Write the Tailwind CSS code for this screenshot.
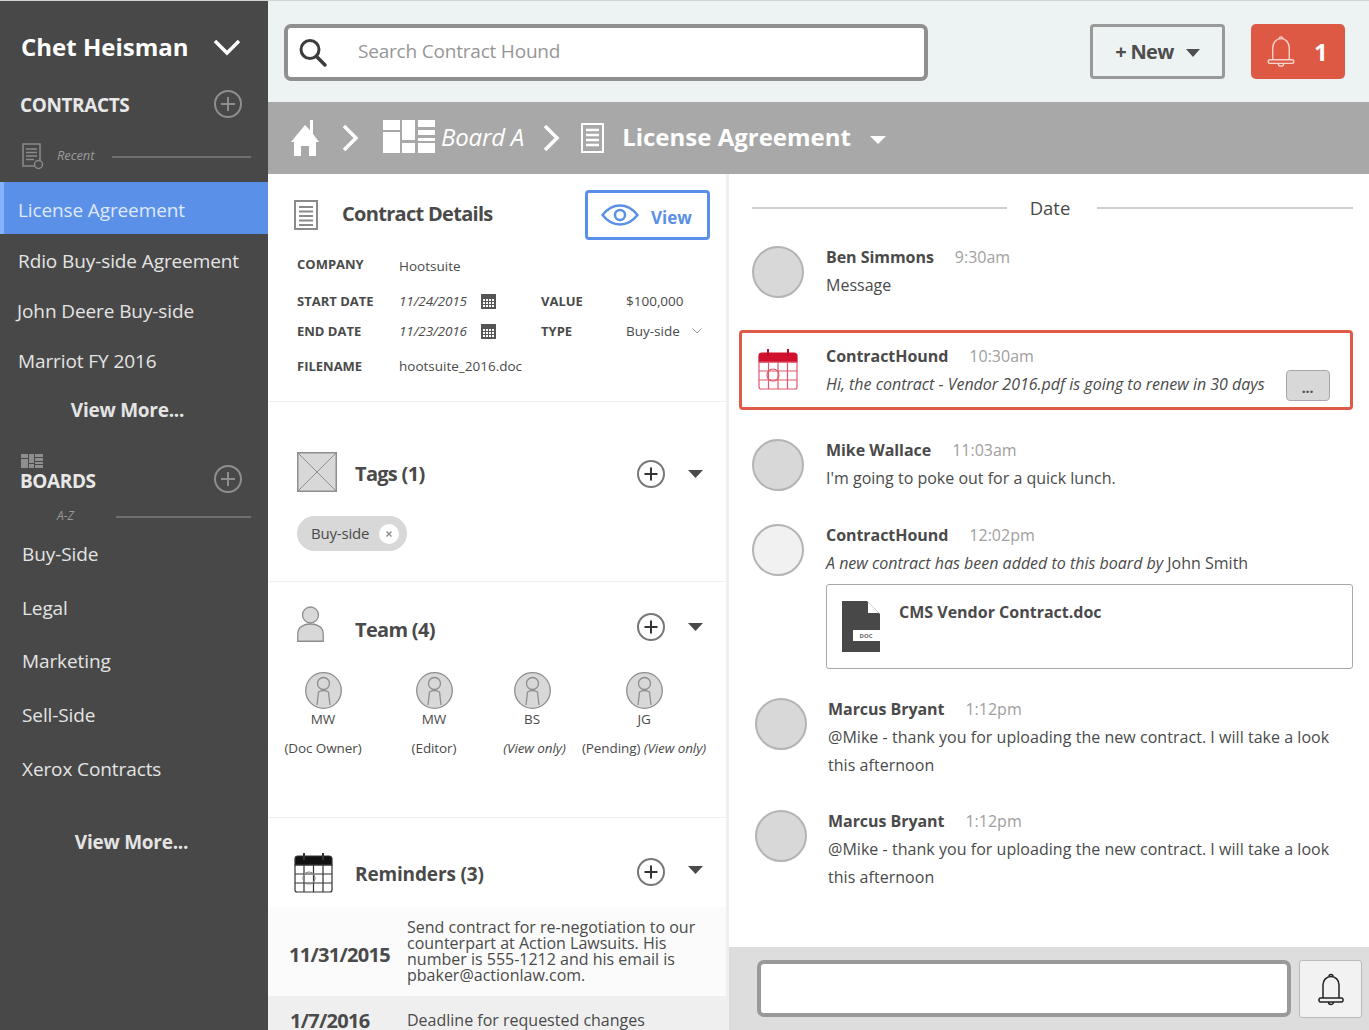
<!DOCTYPE html>
<html lang="en">
<head>
    <meta charset="UTF-8">
    <title>Contract Hound</title>
    <script src="https://cdn.jsdelivr.net/npm/@tailwindcss/browser@4"></script>
</head>
<body class="[font-family:'Open_Sans',sans-serif] text-[#4a4a4a] bg-white">
<div class="flex w-[1369px] h-[1030px] overflow-hidden border-t border-[#d0d4d4]">

    <!-- sidebar -->
    <aside class="w-[268px] shrink-0 bg-[#484848] text-[#e4e4e4]">
        <div class="flex items-center justify-between h-[46px] mt-[23px] pl-[21px] pr-[27px]">
            <span class="text-[24px] font-bold text-white">Chet Heisman</span>
            <svg width="28" height="18" viewBox="0 0 28 18" fill="none" stroke="#fff" stroke-width="3.5"><path d="M2 3l12 12L26 3"/></svg>
        </div>
        <div class="flex items-center justify-between h-[36px] mt-[17px] pl-[20px] pr-[26px]">
            <span class="text-[19px] font-bold tracking-[-0.4px] text-[#e8e8e8]">CONTRACTS</span>
            <svg class="mt-[-2px]" width="28" height="28" viewBox="0 0 28 28" fill="none" stroke="#8e8e8e" stroke-width="2"><circle cx="14" cy="14" r="13"/><path d="M14 7v14M7 14h14"/></svg>
        </div>
        <div class="flex items-center h-[30px] mt-[18px] pl-[22px] pr-[17px]">
            <svg width="22" height="27" viewBox="0 0 22 27" fill="none" stroke="#8a8a8a" stroke-width="1.5"><path d="M1 1h17v22H1z"/><path d="M4 6h11M4 9.500h11M4 13h11M4 16.500h8"/><circle cx="16.500" cy="21.500" r="4" fill="#484848"/></svg>
            <span class="ml-[13px] text-[13px] italic tracking-[-0.1px] text-[#999]">Recent</span>
            <div class="ml-[18px] mt-[2px] flex-1 h-[2px] bg-[#6f6f6f]"></div>
        </div>
        <a class="flex items-center h-[52px] mt-[11px] border-l-[4px] border-[#86b1ff] bg-[#5b90e8] pl-[14px] pt-[5px] text-[19px] tracking-[-0.12px] text-[#dfe9fb]">License Agreement</a>
        <div class="mt-[2px] text-[19px] tracking-[-0.1px]">
            <a class="flex items-center h-[50px] pl-[18px]">Rdio Buy-side Agreement</a>
            <a class="flex items-center h-[50px] pl-[17px]">John Deere Buy-side</a>
            <a class="flex items-center h-[50px] pl-[18px]">Marriot FY 2016</a>
            <a class="flex items-center justify-center h-[50px] pr-[13px] pb-[2px] text-[19px] tracking-[-0.25px] font-bold">View More...</a>
        </div>
        <div class="flex justify-between items-end mt-[18px] pl-[20px] pr-[26px]">
            <div>
                <svg class="ml-[1px]" width="22" height="14" viewBox="0 0 22 14" fill="#8e8e8e"><path d="M0 0h7v4H0zM0 5h7v9H0zM8 0h5v9H8zM8 10h5v4H8zM14 0h8v3h-8zM14 4h8v3h-8zM14 8h8v2h-8zM14 11h8v3h-8z"/></svg>
                <div class="mt-[1px] h-[24px] leading-[24px] text-[19px] font-bold tracking-[-0.4px] text-[#e8e8e8]">BOARDS</div>
            </div>
            <svg width="28" height="28" viewBox="0 0 28 28" fill="none" stroke="#8e8e8e" stroke-width="2"><circle cx="14" cy="14" r="13"/><path d="M14 7v14M7 14h14"/></svg>
        </div>
        <div class="flex items-center h-[20px] mt-[13px] pl-[57px] pr-[17px]">
            <span class="text-[12px] italic text-[#999]">A-Z</span>
            <div class="ml-[42px] mt-[2px] flex-1 h-[2px] bg-[#6f6f6f]"></div>
        </div>
        <div class="mt-[1px] text-[19px] tracking-[-0.1px] pl-[22px]">
            <a class="flex items-center h-[54px]">Buy-Side</a>
            <a class="flex items-center h-[54px]">Legal</a>
            <a class="flex items-center h-[53px]">Marketing</a>
            <a class="flex items-center h-[54px]">Sell-Side</a>
            <a class="flex items-center h-[54px]">Xerox Contracts</a>
        </div>
        <a class="flex items-center justify-center h-[40px] mt-[26px] pr-[5px] text-[19px] tracking-[-0.25px] font-bold">View More...</a>
    </aside>

    <div class="flex-1 flex flex-col min-w-0">
        <!-- top bar -->
        <header class="flex h-[101px] shrink-0 bg-[#edf3f3] pl-[16px] pt-[23px]">
            <div class="flex items-center w-[644px] h-[57px] border-[4px] border-[#8f8f8f] rounded-[7px] bg-white pl-[9px]">
                <svg width="32" height="32" viewBox="0 0 32 32" fill="none" stroke="#3c3c3c" stroke-width="3"><circle cx="13" cy="12.500" r="9"/><path d="M20 20l8 8" stroke-linecap="round" stroke-width="3.500"/></svg>
                <span class="ml-[29px] mb-[2px] text-[19px] tracking-[-0.2px] text-[#969696]">Search Contract Hound</span>
            </div>
            <button class="flex items-center justify-center gap-[12px] ml-[162px] w-[135px] h-[55px] border-[3px] border-[#999] rounded-[4px] text-[20px] font-bold tracking-[-0.7px] text-[#4e4e4e]">
                <span>+ New</span>
                <svg class="mt-[3px]" width="14" height="8" viewBox="0 0 14 8" fill="#4e4e4e"><path d="M0 0h14L7 8z"/></svg>
            </button>
            <button class="flex items-center ml-[26px] pl-[16px] w-[94px] h-[55px] rounded-[5px] bg-[#dd5944] text-white">
                <svg width="28" height="33" viewBox="0 0 30 36" fill="none" stroke="#f8d5cf" stroke-width="1.500"><path d="M6 27V14c0-6 4-10 9-10s9 4 9 10v13"/><path d="M3 27h24q2 0 2 2t-2 2H3q-2 0-2-2t2-2z"/><path d="M12 31a3 3 0 0 0 6 0M13 4a2 2 0 0 1 4 0"/></svg>
                <span class="ml-[19px] text-[24px] font-bold">1</span>
            </button>
        </header>

        <!-- breadcrumb -->
        <nav class="flex items-center h-[72px] shrink-0 bg-[#a8a8a8] pl-[23px] text-white">
            <svg width="28" height="36" viewBox="0 0 28 36" fill="#fff"><path d="M14 5l5 5V0h3v14l6 8h-3v14h-7V26H10v10H3V22H0z"/></svg>
            <svg class="ml-[23px]" width="18" height="28" viewBox="0 0 18 28" fill="none" stroke="#fff" stroke-width="3.500"><path d="M2 2l12 12L2 26"/></svg>
            <svg class="ml-[23px] mb-[4px]" width="52" height="33" viewBox="0 0 52 33" fill="#fff"><path d="M0 0h17v10H0zM0 12h17v21H0zM19 0h13v20H19zM19 23h13v10H19zM35 0h17v7H35zM35 10h17v5H35zM35 18h17v3H35zM35 23h17v10H35z"/></svg>
            <span class="ml-[6px] mb-[2px] text-[24px] italic tracking-[-0.2px]">Board A</span>
            <svg class="ml-[19px]" width="18" height="28" viewBox="0 0 18 28" fill="none" stroke="#fff" stroke-width="3.500"><path d="M2 2l12 12L2 26"/></svg>
            <svg class="ml-[20px]" width="23" height="30" viewBox="0 0 23 30" fill="none" stroke="#fff" stroke-width="2"><path d="M1 1h21v28H1z"/><path d="M5 7h13M5 12h13M5 17h13M5 22h13" stroke-width="2.500"/></svg>
            <span class="ml-[18px] mb-[2px] text-[24px] font-bold">License Agreement</span>
            <svg class="ml-[19px] mt-[4px]" width="16" height="8" viewBox="0 0 16 8" fill="#fff"><path d="M0 0h16L8 8z"/></svg>
        </nav>

        <div class="flex flex-1 min-h-0">
            <!-- details column -->
            <section class="w-[458px] shrink-0 overflow-hidden">
                <div class="h-[228px] border-b border-[#f0f0f0] pt-[16px]">
                    <div class="flex items-center h-[50px] pl-[26px] pr-[16px]">
                        <svg width="24" height="30" viewBox="0 0 24 30" fill="none" stroke="#8a8a8a" stroke-width="2"><path d="M1 1h22v28H1z"/><path d="M5 7h14M5 11.500h14M5 16h14M5 20.500h14M5 25h14" stroke-width="1.800"/></svg>
                        <span class="ml-[24px] mb-[2px] text-[20px] font-bold tracking-[-0.7px]">Contract Details</span>
                        <button class="flex items-center ml-auto pl-[13px] w-[125px] h-[50px] border-[3px] border-[#5b90e8] rounded-[4px] text-[#5b90e8] text-[17px] font-bold">
                            <svg width="38" height="22" viewBox="0 0 38 22" fill="none" stroke="#5b90e8" stroke-width="2.500"><path d="M1.500 11C7 4 13 1.500 19 1.500S31 4 36.500 11C31 18 25 20.500 19 20.500S7 18 1.500 11z"/><circle cx="19" cy="11" r="5"/></svg>
                            <span class="ml-[12px] mt-[6px]">View</span>
                        </button>
                    </div>
                    <div class="flex items-center h-[32px] mt-[10px] pl-[29px] text-[13.500px]">
                        <span class="w-[102px] text-[13px] font-bold mt-[-2px]">COMPANY</span><span>Hootsuite</span>
                    </div>
                    <div class="flex items-center h-[30px] mt-[4px] pl-[29px] text-[13.500px]">
                        <span class="w-[102px] text-[13px] font-bold mt-[2px]">START DATE</span>
                        <span class="w-[82px] italic tracking-[-0.1px]">11/24/2015</span>
                        <svg width="15" height="15" viewBox="0 0 15 15"><path fill="#555" d="M0 0h15v15H0z"/><path fill="#fff" d="M2 5h11v8H2z"/><path stroke="#555" d="M2 7.500h11M2 10.500h11M4.500 5v8M7.500 5v8M10.500 5v8"/></svg>
                        <span class="ml-[45px] mt-[2px] w-[85px] text-[13px] font-bold">VALUE</span>
                        <span>$100,000</span>
                    </div>
                    <div class="flex items-center h-[30px] pl-[29px] text-[13.500px]">
                        <span class="w-[102px] text-[13px] font-bold mt-[2px]">END DATE</span>
                        <span class="w-[82px] italic tracking-[-0.1px]">11/23/2016</span>
                        <svg width="15" height="15" viewBox="0 0 15 15"><path fill="#555" d="M0 0h15v15H0z"/><path fill="#fff" d="M2 5h11v8H2z"/><path stroke="#555" d="M2 7.500h11M2 10.500h11M4.500 5v8M7.500 5v8M10.500 5v8"/></svg>
                        <span class="ml-[45px] mt-[2px] w-[85px] text-[13px] font-bold">TYPE</span>
                        <span>Buy-side</span>
                        <svg class="ml-[12px]" width="10" height="6" viewBox="0 0 10 6" fill="none" stroke="#999"><path d="M.5.500L5 5 9.500.500"/></svg>
                    </div>
                    <div class="flex items-center h-[32px] mt-[4px] pl-[29px] text-[13.500px]">
                        <span class="w-[102px] text-[13px] font-bold mt-[2px]">FILENAME</span><span>hootsuite_2016.doc</span>
                    </div>
                </div>

                <div class="h-[180px] border-b border-[#f0f0f0] pt-[50px]">
                    <div class="flex items-center h-[40px] pl-[29px] pr-[23px]">
                        <svg width="40" height="40" viewBox="0 0 40 40" fill="#d8d8d8" stroke="#8e8e8e"><path stroke-width="1.500" d="M.75.750h38.500v38.500H.75z"/><path d="M1 1l38 38M39 1L1 39"/></svg>
                        <span class="ml-[18px] mt-[4px] text-[20px] font-bold tracking-[-0.7px]">Tags (1)</span>
                        <svg class="ml-auto mt-[4px]" width="28" height="28" viewBox="0 0 28 28" fill="none" stroke="#777" stroke-width="2"><circle cx="14" cy="14" r="13"/><path d="M14 7.500v13M7.500 14h13" stroke="#333"/></svg>
                        <svg class="ml-[23px] mt-[3px]" width="15" height="8" viewBox="0 0 15 8" fill="#4a4a4a"><path d="M0 0h15L7.500 8z"/></svg>
                    </div>
                    <div class="flex items-center w-[110px] h-[35px] mt-[24px] ml-[29px] pl-[14px] rounded-full bg-[#d8d8d8] text-[15px] tracking-[-0.2px]">
                        <span>Buy-side</span>
                        <span class="flex items-center justify-center ml-[10px] w-[20px] h-[20px] rounded-full bg-white">
                            <svg width="6" height="6" viewBox="0 0 6 6" stroke="#888" stroke-width="1.300"><path d="M.5.500l5 5M5.500.500l-5 5"/></svg>
                        </span>
                    </div>
                </div>

                <div class="h-[236px] border-b border-[#f0f0f0] pt-[24px]">
                    <div class="flex items-start h-[36px] pl-[29px] pr-[23px]">
                        <svg width="27" height="36" viewBox="0 0 27 36" fill="#d8d8d8" stroke="#8e8e8e" stroke-width="1.300"><circle cx="13.500" cy="9" r="8"/><path d="M.75 35.250V28c0-7 6-10 12.750-10s12.750 3 12.750 10v7.250z"/></svg>
                        <span class="ml-[31px] mt-[10px] text-[20px] leading-[28px] font-bold tracking-[-0.7px]">Team (4)</span>
                        <svg class="ml-auto mt-[7px]" width="28" height="28" viewBox="0 0 28 28" fill="none" stroke="#777" stroke-width="2"><circle cx="14" cy="14" r="13"/><path d="M14 7.500v13M7.500 14h13" stroke="#333"/></svg>
                        <svg class="ml-[23px] mt-[17px]" width="15" height="8" viewBox="0 0 15 8" fill="#4a4a4a"><path d="M0 0h15L7.500 8z"/></svg>
                    </div>
                    <div class="grid grid-cols-[110px_112px_84px_140px] mt-[30px] text-center text-[13.500px] tracking-[-0.1px]">
                        <div class="flex flex-col items-center">
                            <svg width="37" height="37" viewBox="0 0 37 37" fill="#d8d8d8" stroke="#8e8e8e" stroke-width="1.300"><circle cx="18.500" cy="18.500" r="17.800"/><circle cx="18.500" cy="11.500" r="6" fill="none"/><path d="M12 33l1.500-13q5-3 10 0L25 33" fill="none"/></svg>
                            <span class="h-[20px] leading-[20px]">MW</span>
                            <span class="mt-[9px] h-[20px] leading-[20px]">(Doc Owner)</span>
                        </div>
                        <div class="flex flex-col items-center">
                            <svg width="37" height="37" viewBox="0 0 37 37" fill="#d8d8d8" stroke="#8e8e8e" stroke-width="1.300"><circle cx="18.500" cy="18.500" r="17.800"/><circle cx="18.500" cy="11.500" r="6" fill="none"/><path d="M12 33l1.500-13q5-3 10 0L25 33" fill="none"/></svg>
                            <span class="h-[20px] leading-[20px]">MW</span>
                            <span class="mt-[9px] h-[20px] leading-[20px]">(Editor)</span>
                        </div>
                        <div class="flex flex-col items-center">
                            <svg width="37" height="37" viewBox="0 0 37 37" fill="#d8d8d8" stroke="#8e8e8e" stroke-width="1.300"><circle cx="18.500" cy="18.500" r="17.800"/><circle cx="18.500" cy="11.500" r="6" fill="none"/><path d="M12 33l1.500-13q5-3 10 0L25 33" fill="none"/></svg>
                            <span class="h-[20px] leading-[20px]">BS</span>
                            <span class="mt-[9px] h-[20px] leading-[20px] ml-[5px] italic whitespace-nowrap">(View only)</span>
                        </div>
                        <div class="flex flex-col items-center">
                            <svg width="37" height="37" viewBox="0 0 37 37" fill="#d8d8d8" stroke="#8e8e8e" stroke-width="1.300"><circle cx="18.500" cy="18.500" r="17.800"/><circle cx="18.500" cy="11.500" r="6" fill="none"/><path d="M12 33l1.500-13q5-3 10 0L25 33" fill="none"/></svg>
                            <span class="h-[20px] leading-[20px]">JG</span>
                            <span class="mt-[9px] h-[20px] leading-[20px] whitespace-nowrap">(Pending) <i>(View only)</i></span>
                        </div>
                    </div>
                </div>

                <div class="h-[89px] pt-[34px]">
                    <div class="flex items-center h-[40px] pl-[26px] pr-[23px]">
                        <svg width="39" height="41" viewBox="0 0 39 41" fill="none" stroke="#333" stroke-width="1.200"><path d="M1 7q0-3 3-3h31q3 0 3 3v6H1z" fill="#111"/><path d="M1 13h37v25q0 2-2 2H3q-2 0-2-2zM1 22h37M1 31h37M10 13v27M19.500 13v27M29 13v27"/><path d="M10 1v7M29 1v7" stroke-width="2"/><circle cx="15" cy="26" r="6" stroke="#888"/></svg>
                        <span class="ml-[22px] mt-[4px] text-[19px] font-bold tracking-[-0.15px]">Reminders (3)</span>
                        <svg class="ml-auto" width="28" height="28" viewBox="0 0 28 28" fill="none" stroke="#777" stroke-width="2"><circle cx="14" cy="14" r="13"/><path d="M14 7.500v13M7.500 14h13" stroke="#333"/></svg>
                        <svg class="ml-[23px] mb-[4px]" width="15" height="8" viewBox="0 0 15 8" fill="#4a4a4a"><path d="M0 0h15L7.500 8z"/></svg>
                    </div>
                </div>
                <div class="flex items-center h-[89px] bg-[#fbfbfb] pl-[21px]">
                    <span class="w-[118px] mt-[6px] text-[20px] font-bold tracking-[-0.7px]">11/31/2015</span>
                    <p class="w-[300px] mb-[2px] text-[16px] leading-[16px]">Send contract for re-negotiation to our counterpart at Action Lawsuits. His number is 555-1212 and his email is pbaker@actionlaw.com.</p>
                </div>
                <div class="flex items-start h-[34px] bg-[#efefef] pl-[22px] pt-[16px]">
                    <span class="w-[117px] text-[20px] font-bold tracking-[-0.7px] leading-[18px]">1/7/2016</span>
                    <p class="text-[16px] leading-[18px] mt-[-1px]">Deadline for requested changes</p>
                </div>
            </section>

            <div class="w-[3px] shrink-0 bg-[#efefef]"></div>

            <!-- activity column -->
            <section class="flex-1 flex flex-col min-w-0">
                <div class="flex-1 pl-[23px] pr-[16px]">
                    <div class="flex items-center h-[30px] mt-[19px]">
                        <div class="w-[255px] h-[2px] bg-[#cfcfcf]"></div>
                        <span class="w-[90px] pr-[4px] text-center text-[18.500px]">Date</span>
                        <div class="flex-1 h-[2px] bg-[#cfcfcf]"></div>
                    </div>

                    <div class="flex mt-[23px] h-[52px]">
                        <div class="w-[52px] h-[52px] rounded-full bg-[#d8d8d8] border-2 border-[#b4b4b4]"></div>
                        <div class="ml-[22px]">
                            <div class="h-[22px] leading-[22px] text-[16px]"><b class="tracking-[-0.05px]">Ben Simmons</b><span class="ml-[21px] text-[#a0a0a0]">9:30am</span></div>
                            <div class="mt-[5px] h-[24px] leading-[24px] text-[16px]">Message</div>
                        </div>
                    </div>

                    <div class="flex ml-[-13px] mt-[32px] h-[80px] border-[3px] border-[#e05a48] rounded-[4px] pl-[16px] pt-[16px]">
                        <svg class="shrink-0" width="40" height="41" viewBox="0 0 40 41" fill="none" stroke="#e0596a" stroke-width="1.200"><path d="M1 7q0-3 3-3h32q3 0 3 3v6H1z" fill="#d0102c" stroke="#d0102c"/><path d="M1 13h38v25q0 2-2 2H3q-2 0-2-2zM1 22h38M1 31h38M10.500 13v27M20 13v27M29.500 13v27"/><path d="M10 0v7M30 0v7" stroke="#b01028" stroke-width="2"/><circle cx="15" cy="26" r="6"/></svg>
                        <div class="ml-[28px] mt-[-4px]">
                            <div class="h-[22px] leading-[22px] text-[16px]"><b class="tracking-[-0.05px]">ContractHound</b><span class="ml-[21px] text-[#a0a0a0]">10:30am</span></div>
                            <div class="mt-[5px] h-[24px] leading-[24px] text-[16px] italic whitespace-nowrap">Hi, the contract - Vendor 2016.pdf is going to renew in 30 days</div>
                        </div>
                        <button class="ml-[21px] mt-[21px] w-[44px] h-[31px] rounded-[4px] bg-[#d8d8d8] border border-[#a8a8a8] text-[14px] font-bold leading-[34px]">...</button>
                    </div>

                    <div class="flex mt-[29px] h-[52px]">
                        <div class="w-[52px] h-[52px] rounded-full bg-[#d8d8d8] border-2 border-[#b4b4b4]"></div>
                        <div class="ml-[22px]">
                            <div class="h-[22px] leading-[22px] text-[16px]"><b class="tracking-[-0.05px]">Mike Wallace</b><span class="ml-[21px] text-[#a0a0a0]">11:03am</span></div>
                            <div class="mt-[5px] h-[24px] leading-[24px] text-[16px]">I'm going to poke out for a quick lunch.</div>
                        </div>
                    </div>

                    <div class="flex mt-[33px]">
                        <div class="w-[52px] h-[52px] rounded-full bg-[#f1f1f1] border-2 border-[#b4b4b4] shrink-0"></div>
                        <div class="ml-[22px] flex-1">
                            <div class="h-[22px] leading-[22px] text-[16px]"><b class="tracking-[-0.05px]">ContractHound</b><span class="ml-[21px] text-[#a0a0a0]">12:02pm</span></div>
                            <div class="mt-[5px] h-[24px] leading-[24px] text-[16px]"><i>A new contract has been added to this board by</i> John Smith</div>
                            <div class="flex h-[85px] mt-[9px] border border-[#a8a8a8] rounded-[3px] pl-[15px] pt-[16px]">
                                <svg width="38" height="51" viewBox="0 0 38 51"><path fill="#484848" d="M0 0h25l13 13v38H0z"/><path fill="#fff" d="M26 1l11 11H26z"/><path fill="#fff" d="M11 29h27v11H11z"/><text x="24" y="37" font-size="6" fill="#666" text-anchor="middle" font-weight="700">DOC</text></svg>
                                <span class="ml-[19px] h-[22px] leading-[22px] text-[16px] font-bold">CMS Vendor Contract.doc</span>
                            </div>
                        </div>
                    </div>

                    <div class="flex mt-[29px] ml-[3px]">
                        <div class="w-[52px] h-[52px] rounded-full bg-[#d8d8d8] border-2 border-[#b4b4b4] shrink-0"></div>
                        <div class="ml-[21px]">
                            <div class="h-[22px] leading-[22px] text-[16px]"><b class="tracking-[-0.05px]">Marcus Bryant</b><span class="ml-[21px] text-[#a0a0a0]">1:12pm</span></div>
                            <p class="mt-[3px] w-[525px] leading-[28px] text-[16px] tracking-[0.04px]">@Mike - thank you for uploading the new contract. I will take a look this afternoon</p>
                        </div>
                    </div>

                    <div class="flex mt-[31px] ml-[3px]">
                        <div class="w-[52px] h-[52px] rounded-full bg-[#d8d8d8] border-2 border-[#b4b4b4] shrink-0"></div>
                        <div class="ml-[21px]">
                            <div class="h-[22px] leading-[22px] text-[16px]"><b class="tracking-[-0.05px]">Marcus Bryant</b><span class="ml-[21px] text-[#a0a0a0]">1:12pm</span></div>
                            <p class="mt-[3px] w-[525px] leading-[28px] text-[16px] tracking-[0.04px]">@Mike - thank you for uploading the new contract. I will take a look this afternoon</p>
                        </div>
                    </div>
                </div>

                <footer class="flex h-[83px] shrink-0 bg-[#dddddd] pl-[28px] pt-[13px]">
                    <div class="w-[534px] h-[57px] bg-white border-[4px] border-[#999] rounded-[7px]"></div>
                    <button class="flex items-center justify-center ml-[8px] w-[63px] h-[58px] bg-[#f2f2f2] border border-[#bbb] rounded-[3px]">
                        <svg width="26" height="33" viewBox="0 0 26 33" fill="none" stroke="#222" stroke-width="1.500"><path d="M5 25V12c0-5 3.500-8.500 8-8.500s8 3.500 8 8.500v13"/><path d="M2.500 25h21q1.500 0 1.500 2t-1.500 2h-21Q1 29 1 27t1.500-2z"/><path d="M10.500 29a2.500 2.500 0 0 0 5 0M11 3.500a2 2 0 0 1 4 0"/></svg>
                    </button>
                </footer>
            </section>
        </div>
    </div>
</div>
</body>
</html>
